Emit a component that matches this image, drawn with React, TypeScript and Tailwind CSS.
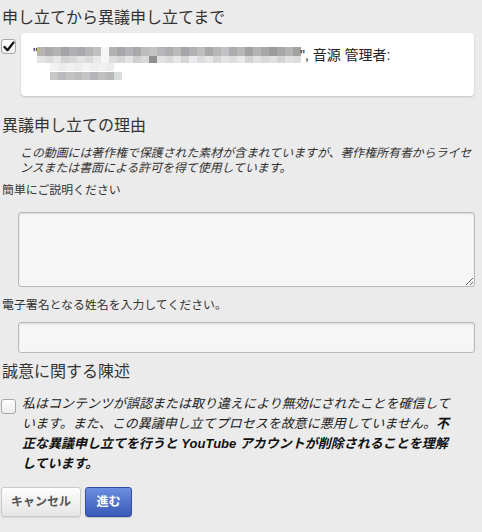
import React from 'react';

const ROW_TOP = [
  '#b8b4b1', '#aaa9ab', '#b5b3b2', '#a3a4a6', '#b0b0b3', '#a8a9ac', '#b6b5b5', '#c1c0c0',
  '#f6f6f6', '#b3b1b1', '#a7a6aa', '#b4b4b6', '#a9a8ab', '#bdbcbd', '#c4c3c3', '#b7b6b8',
  '#aeadb0', '#bcbbba', '#a6a6a8', '#b2b2b4', '#bfbebf', '#a9a9ab', '#b8b7b7', '#c2c2c4',
  '#acacae', '#b9b8b8', '#a2a2a3', '#b4b3b4', '#a8a8a8', '#9c9c9c', '#a7a7a7', '#b4b4b4',
  '#a1a1a1',
];
const ROW_BOTTOM = [
  '#e6e4e3', '#dcdcdc', '#e7e6e4', '#d2d2d2', '#d8d8da', '#e3e3e3', '#dadada', '#e8e8e8',
  '#f6f6f6', '#dedede', '#d7d6d4', '#e4e4e6', '#cfcfcf', '#d9d9d9', '#8f8f8f', '#e2e2e2',
  '#dadada', '#e6e6e8', '#d5d5d5', '#e8eaee', '#dcdcdc', '#e6e6e6', '#d6d6d6', '#e4e4e4',
  '#dedede', '#e9e9e9', '#d3d3d3', '#e2e2e2', '#d8d8d8', '#e0e0e0', '#d4d4d4', '#e1e1e1',
  '#dcdcdc',
];
const SUB_TOP = ['#f2f2f2', '#eaebed', '#f0f0f0', '#ececec', '#f3f3f3', '#eeeeee', '#f1f1f1', '#ededed'];
const SUB_BOTTOM = ['#c9c7c6', '#b9bbc0', '#c3c3c3', '#bdbdbd', '#c6c4c4', '#b5b5b9', '#c0bfbf', '#b9b9b9', '#d9dcdc'];

function Pixelated() {
  return (
    <svg width="266" height="36" viewBox="0 0 266 36" className="block">
      {ROW_TOP.map((c, i) => (
        <rect key={'a' + i} x={i * 8} y={0} width={8} height={9} fill={c} />
      ))}
      {ROW_BOTTOM.map((c, i) => (
        <rect key={'b' + i} x={i * 8} y={9} width={8} height={7} fill={c} />
      ))}
      {SUB_TOP.map((c, i) => (
        <rect key={'c' + i} x={13 + i * 8} y={16} width={8} height={8} fill={c} />
      ))}
      {SUB_BOTTOM.map((c, i) => (
        <rect key={'d' + i} x={13 + i * 8} y={25} width={8} height={8} fill={c} />
      ))}
    </svg>
  );
}

function Checkbox({ checked }: { checked?: boolean }) {
  return (
    <div className="w-[15px] h-[15px] shrink-0 rounded-[3px] border border-[#a9a9a9] bg-gradient-to-b from-white to-[#ececec] shadow-[inset_0_1px_0_#fff] flex items-center justify-center">
      {checked && (
        <svg width="12" height="11" viewBox="0 0 12 11">
          <path d="M1.5 6 L4.5 9.2 L10.5 1.5" fill="none" stroke="#111" strokeWidth="2.2" strokeLinecap="round" strokeLinejoin="round" />
        </svg>
      )}
    </div>
  );
}

export default function App() {
  return (
    <div className="w-[482px] min-h-[532px] bg-[#ebebeb] text-[#333] font-['Liberation_Sans','Noto_Sans_CJK_JP',sans-serif]">
      {/* Claim section */}
      <div className="pt-[7px] pl-[2px] text-[16px] leading-[22px] text-[#333]">申し立てから異議申し立てまで</div>
      <div className="mt-[4px] flex items-start pl-[1px]">
        <div className="mt-[6px]">
          <Checkbox checked />
        </div>
        <div className="ml-[5px] w-[453px] h-[63px] bg-white rounded-[4px] shadow-[0_1px_2px_rgba(0,0,0,0.18)] relative">
          <div className="absolute left-[12px] top-[13px] flex items-start">
            <span className="text-[14px] leading-[18px] text-[#222] -mt-[2px]">"</span>
            <div className="ml-[-1px] mt-[1px]">
              <Pixelated />
            </div>
            <span className="ml-[-3px] text-[14px] leading-[18px] text-[#222] whitespace-nowrap">", 音源 管理者:</span>
          </div>
        </div>
      </div>

      {/* Reason section */}
      <div className="mt-[19px] pl-[2px] text-[16px] leading-[22px]">異議申し立ての理由</div>
      <div className="mt-[9px] pl-[20px] text-[11.9px] leading-[15px] italic text-[#333] whitespace-nowrap">
        この動画には著作権で保護された素材が含まれていますが、著作権所有者からライセ
        <br />
        ンスまたは書面による許可を得て使用しています。
      </div>
      <div className="mt-[5px] pl-[2px] text-[11.9px] leading-[18px]">簡単にご説明ください</div>
      <textarea className="block mt-[13px] ml-[18px] w-[457px] h-[75px] rounded-[3px] border border-[#b9b9b9] bg-[#f6f6f6] shadow-[inset_0_1px_2px_rgba(0,0,0,0.12)] outline-none" />
      <div className="mt-[9px] pl-[2px] text-[11.9px] leading-[18px]">電子署名となる姓名を入力してください。</div>
      <input className="block mt-[8px] ml-[18px] w-[457px] h-[31px] rounded-[3px] border border-[#b9b9b9] bg-[#f6f6f6] shadow-[inset_0_1px_2px_rgba(0,0,0,0.12)] outline-none" />

      {/* Good faith statement */}
      <div className="mt-[8px] pl-[2px] text-[16px] leading-[22px]">誠意に関する陳述</div>
      <div className="mt-[11px] flex items-start pl-[1px]">
        <div className="mt-[5px]">
          <Checkbox />
        </div>
        <div className="ml-[6px] text-[13px] leading-[20px] italic text-[#222] whitespace-nowrap">
          私はコンテンツが誤認または取り違えにより無効にされたことを確信して
          <br />
          います。また、この異議申し立てプロセスを故意に悪用していません。
          <b className="font-bold text-[#111]">不</b>
          <br />
          <b className="font-bold text-[#111]">正な異議申し立てを行うと YouTube アカウントが削除されることを理解</b>
          <br />
          <b className="font-bold text-[#111]">しています。</b>
        </div>
      </div>

      {/* Actions */}
      <div className="mt-[13px] pl-[1px] flex gap-[4px]">
        <button className="w-[80px] h-[30px] rounded-[3px] border border-[#c8c8c8] bg-gradient-to-b from-[#fdfdfd] to-[#e5e5e5] text-[12px] font-bold text-[#555] shadow-[0_1px_1px_rgba(0,0,0,0.08)]">
          キャンセル
        </button>
        <button className="w-[47px] h-[30px] rounded-[3px] border border-[#304f9f] bg-gradient-to-b from-[#6b8fe0] to-[#3a5ab6] text-[12px] font-bold text-white shadow-[0_1px_1px_rgba(0,0,0,0.15)]">
          進む
        </button>
      </div>
    </div>
  );
}
